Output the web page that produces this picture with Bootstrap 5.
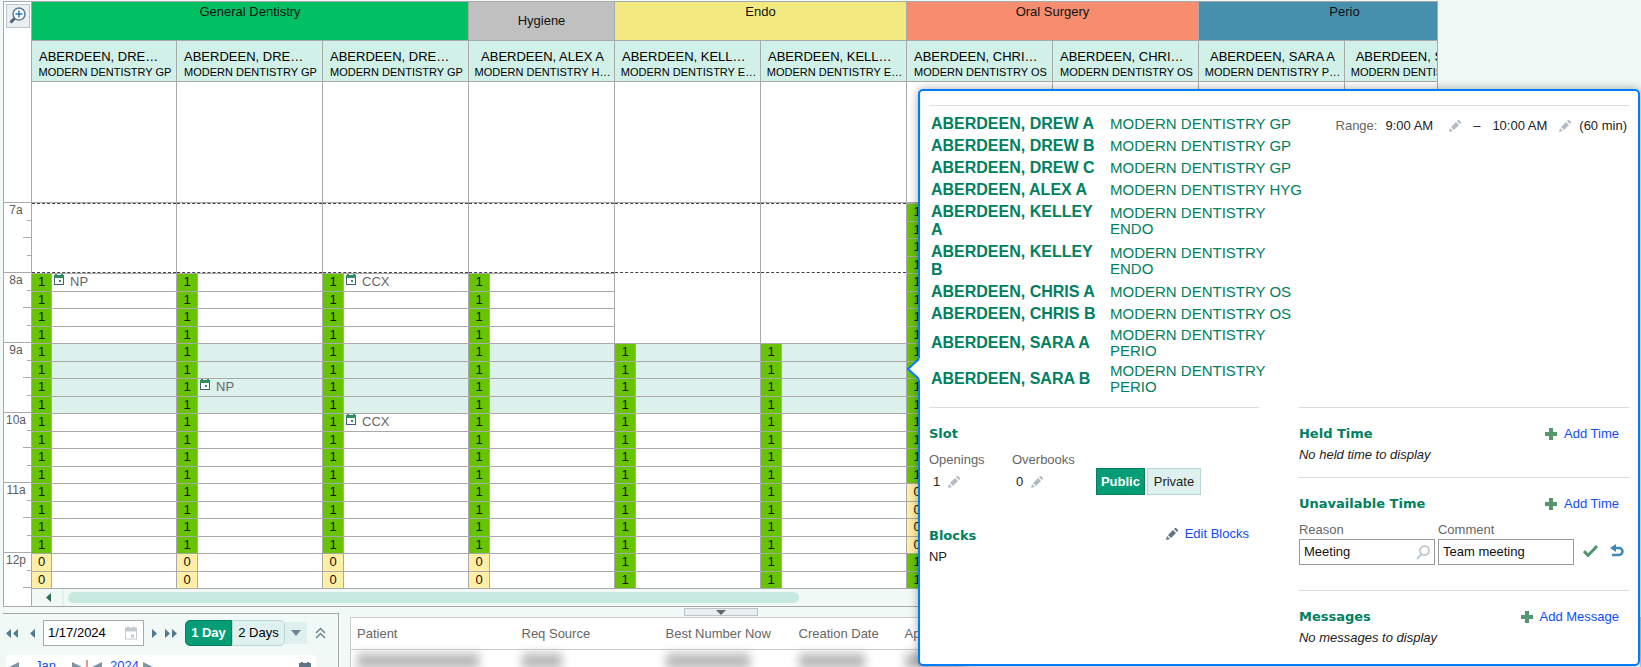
<!DOCTYPE html>
<html lang="en">
<head>
<meta charset="utf-8">
<meta name="viewport" content="width=device-width, initial-scale=1">
<title>Schedule</title>
<link href="https://cdn.jsdelivr.net/npm/bootstrap@5.3.0/dist/css/bootstrap.min.css" rel="stylesheet">
<style>
:root { --line:#a9a9a9; --pale:#f0f9f6; --green:#008060; --blue:#0f4bff; }
body { font:13px/16px "Liberation Sans",Arial,sans-serif; background:var(--pale); color:#222; overflow:hidden; }
button, input { font:inherit; color:inherit; }
svg { display:block; flex:none; }
.app-shell { min-height:100vh; overflow:hidden; }

/* schedule */
.schedule { margin:1px 203px 0 3px; border:1px solid var(--line); background:#fff; }
.ruler { width:28px; flex:none; border-right:1px solid var(--line); color:#5b5b5b; font-size:12px; line-height:14px; text-align:center; }
.corner { height:200px; padding:2px; }
.zoom-btn { width:24px; height:24px; padding:0; border:1px solid #b9c4c9; background:#eaeff2; display:grid; place-items:center; }
.tick { height:18px; position:relative; }
.tick:nth-child(odd) { height:17px; }
.tick::before { content:""; position:absolute; top:0; right:0; width:4px; height:1px; background:var(--line); }
.tick.half::before { width:8px; }
.tick.hour::before { width:100%; }
.tick.hour { padding:1px 3px 0 0; }
.sheet { overflow:hidden; min-width:0; flex:1; }
.group-row, .head-row, .lane-row { width:1460px; display:flex; }
.group { height:38px; padding-top:2px; border-right:1px solid var(--line); text-align:center; color:#111; }
.group.mid { padding-top:11px; }
.g1 { width:146px; } .g2 { width:292px; } .g3 { width:437px; }
.head-row { border-top:1px solid var(--line); border-bottom:1px solid var(--line); background:#d0f0e8; color:#000; }
.person { width:146px; height:40px; padding:7px 0 0 2px; border-right:1px solid var(--line); text-align:center; white-space:nowrap; }
.person:first-child, .lane:first-child { width:145px; }
.person div { line-height:17px; }
.person div.cut { text-align:left; padding-left:5px; }
.person p { margin:0; font-size:11px; line-height:15px; }
.lane { width:146px; border-right:1px solid var(--line); }
.closed { height:121px; border-bottom:1px solid var(--line); }
.early { height:70px; border:dashed #444; border-width:1px 0; }
.empty-hour { height:70px; }
.slot-line { display:flex; height:17px; border-top:1px solid var(--line); }
.slot-line:nth-child(odd) { height:18px; }
.slot-line.sel { background:#ddf1ec; }
.seat { width:21px; flex:none; background:#68c400; color:#111; text-align:center; border-right:1px solid var(--line); line-height:15px; }
.lane:first-child .seat { width:20px; }
.seat.zero { background:#ffefa5; }
.visit { color:#666; padding-left:2px; gap:6px; display:flex; align-items:flex-start; line-height:15px; }
.h-scroll { height:18px; border-top:1px solid var(--line); background:var(--pale); display:flex; align-items:center; }
.scroll-left { width:32px; height:17px; border:0; border-right:2px solid #e3f1ed; padding:0 0 0 14px; background:none; }
.thumb { width:52%; height:11px; border-radius:6px; background:#c6eae0; margin-left:4px; }

/* lower area */
.lower { padding-left:3px; }
.cal-pane { width:336px; margin-top:6px; border:solid var(--line); border-width:1px 1px 0 0; flex:none; }
.bar { padding:6px 0 0 3px; height:41px; }
.plain-btn { border:0; background:none; padding:0; }
.twin { display:flex; gap:2px; }
.date-field { width:101px; height:26px; background:#fff; border:1px solid var(--line); flex:none; }
.date-field input { border:0; outline:0; padding:0 0 0 4px; width:81px; background:none; color:#000; }
.day-btn { height:26px; border:1px solid #b9d7d7; background:#dff1ee; padding:0; color:#000; border-radius:0 5px 5px 0; width:53px; }
.day-btn.on { background:#059d76; border-color:#048060; color:#fff; border-radius:5px 0 0 5px; font-weight:bold; width:47px; white-space:nowrap; }
.more-btn { width:22px; height:22px; background:#dff1ee; border:0; padding:0 0 0 5px; }
.mini-cal { margin:0 22px 0 3px; background:#fff; border-radius:4px 4px 0 0; height:30px; padding:3px 5px 0 3px; }
.mini-cal a { color:var(--blue); text-decoration:none; }
.split-row { height:10px; padding-top:1px; }
.splitter { width:74px; height:8px; border:1px solid #bcc6ca; background:#e9eef1; padding:0; display:grid; place-items:center; margin-left:334px; }
.list-pane { min-width:0; margin-left:11px; }
.req-table { background:#fff; border:1px solid #ccc; table-layout:fixed; width:100%; color:#666; }
.req-table th { font-weight:normal; height:32px; padding:0 6px; border-bottom:1px solid #ccc; }
.req-table td { height:40px; padding:3px 6px; vertical-align:top; }
.smudge { display:block; height:16px; background:#bbb; filter:blur(5px); }

/* slot bubble */
.bubble { position:absolute; top:89px; right:1px; width:44%; min-height:577px; background:#fff; border:2px solid #007bff; border-radius:5px; padding:14px 9px; box-shadow:0 0 10px rgba(0,0,0,.35); }
.bubble-arrow { position:absolute; left:-14px; top:267px; }
.rule { border-top:1px solid #ddd; }
.people { color:var(--green); margin-top:3px; }
.people td { padding:2px 0; vertical-align:middle; }
.people .who { font-weight:bold; font-size:16px; line-height:18px; width:181px; padding:2px 9px 2px 2px; }
.people .dept { font-size:15px; line-height:16px; width:196px; }
.halves { display:grid; grid-template-columns:1fr 1fr; column-gap:40px; margin-top:10px; }
.part { padding-top:17px; }
.sec { font:bold 13px/18px "DejaVu Sans","Liberation Sans",sans-serif; color:var(--green); margin:0; }
.muted { color:#666; }
.act { color:var(--blue); text-decoration:none; display:flex; gap:7px; align-items:center; margin-right:10px; }
.fields { padding-top:9px; }
.value-line { padding:6px 0 0 4px; }
.pill-btn { height:27px; border:1px solid #b9d7d7; background:#dff1ee; padding:0; width:54px; white-space:nowrap; }
.pill-btn.on { background:#059d76; border-color:#048060; color:#fff; font-weight:bold; width:49px; }
.box { width:136px; height:26px; border:1px solid #999; background:#fff; display:flex; align-items:center; margin-top:1px; }
.box input { border:0; outline:0; background:none; width:100%; padding:0 4px; min-width:0; color:#111; }
</style>
</head>
<body>
<svg width="0" height="0" class="position-absolute" aria-hidden="true">
  <symbol id="i-cal" viewBox="0 0 10 11"><path d="M0 3h10v8H0z" fill="#3f5f78"/><path d="M1 4h8v6H1z" fill="#fff"/><path d="M1 0h2v1h4V0h2v1h1v3H0V1h1z" fill="#2e8b62"/><path d="M5 6h2v2H5z" fill="#2e8b62"/></symbol>
  <symbol id="i-cal-g" viewBox="0 0 12 13"><path fill="currentColor" fill-rule="evenodd" d="M0 1h2V0h2v1h4V0h2v1h2v12H0zM1 5v7h10V5zM6 8h3v3H6z"/></symbol>
  <symbol id="i-pen" viewBox="0 0 12 12"><path fill="currentColor" d="M0 12l1-4 3 3zM2 7l5-5 3 3-5 5zM8 1l1-1h1l2 2v1l-1 1z"/></symbol>
  <symbol id="i-plus" viewBox="0 0 12 12"><path fill="#56966f" d="M4 0h4v4h4v4H8v4H4V8H0V4h4z"/></symbol>
  <symbol id="i-left" viewBox="0 0 5 9"><path fill="currentColor" d="M5 0v9L0 4.500z"/></symbol>
  <symbol id="i-right" viewBox="0 0 5 9"><path fill="currentColor" d="M0 0v9l5-4.500z"/></symbol>
</svg>

<div class="app-shell position-relative">
  <main class="schedule">
    <div class="d-flex">
      <div class="ruler" id="ruler">
        <div class="corner"><button class="zoom-btn" aria-label="Zoom in"><svg width="18" height="18" viewBox="0 0 18 18" fill="none"><circle cx="10" cy="7" r="6" fill="#fff" stroke="#5b7c93" stroke-width="1.500"/><path d="M10 3.500v7M6.500 7h7" stroke="#2878b0" stroke-width="1.500"/><path d="M5.500 11.500L1.500 15.500" stroke="#4d6375" stroke-width="3"/></svg></button></div>
      </div>
      <div class="sheet">
        <div class="group-row">
          <div class="group g3" style="background:#00c063">General Dentistry</div>
          <div class="group g1 mid" style="background:#c0c0c0">Hygiene</div>
          <div class="group g2" style="background:#f2e981">Endo</div>
          <div class="group g2" style="background:#f68d6f">Oral Surgery</div>
          <div class="group g2" style="background:#4690ae">Perio</div>
        </div>
        <div class="head-row" id="heads"></div>
        <div class="lane-row" id="lanes"></div>
        <div class="h-scroll"><button class="scroll-left" aria-label="Scroll left"><svg width="5" height="9" color="#2f6b50"><use href="#i-left"/></svg></button><div class="thumb"></div></div>
      </div>
    </div>
  </main>

  <div class="lower d-flex">
    <section class="cal-pane">
      <div class="bar d-flex align-items-start">
        <div class="d-flex align-items-center gap-2 w-100">
          <button class="plain-btn twin" aria-label="Previous week"><svg width="5" height="9" color="#56788c"><use href="#i-left"/></svg><svg width="5" height="9" color="#56788c"><use href="#i-left"/></svg></button>
          <button class="plain-btn ms-1" aria-label="Previous day"><svg width="5" height="9" color="#56788c"><use href="#i-left"/></svg></button>
          <div class="date-field d-flex align-items-center"><input aria-label="Date" value="1/17/2024"><svg width="12" height="14" color="#c3ccd2"><use href="#i-cal-g"/></svg></div>
          <button class="plain-btn" aria-label="Next day"><svg width="5" height="9" color="#56788c"><use href="#i-right"/></svg></button>
          <button class="plain-btn twin" aria-label="Next week"><svg width="5" height="9" color="#56788c"><use href="#i-right"/></svg><svg width="5" height="9" color="#56788c"><use href="#i-right"/></svg></button>
          <div class="d-flex align-items-center"><button class="day-btn on">1 Day</button><button class="day-btn">2 Days</button><button class="more-btn" aria-label="More views"><svg width="12" height="6"><path d="M1 0h10L6 6z" fill="#6b8494"/></svg></button></div>
          <button class="plain-btn" aria-label="Collapse"><svg width="11" height="12" fill="none" stroke="#6b8494" stroke-width="1.500"><path d="M1 6l4.500-4.500L10 6M1 11l4.500-4.500L10 11"/></svg></button>
        </div>
      </div>
      <div class="mini-cal d-flex align-items-start">
        <svg class="mt-1" width="10" height="9"><path d="M10 0v9L0 5z" fill="#8294a3"/></svg>
        <a href="#" class="mx-3">Jan</a>
        <svg class="mt-1" width="10" height="9"><path d="M0 0v9l10-4z" fill="#8294a3"/></svg>
        <svg class="mx-1" width="2" height="20"><path d="M1 2v18" stroke="#c0392b"/></svg>
        <svg class="mt-1 me-2" width="10" height="9"><path d="M10 0v9L0 5z" fill="#8294a3"/></svg>
        <a href="#" class="me-1">2024</a>
        <svg class="mt-1" width="10" height="9"><path d="M0 0v9l10-4z" fill="#8294a3"/></svg>
        <svg class="ms-auto mt-1" width="12" height="13" color="#5f7585"><use href="#i-cal-g"/></svg>
      </div>
    </section>
    <section class="list-pane flex-grow-1">
      <div class="split-row"><button class="splitter" aria-label="Collapse list"><svg width="10" height="5"><path d="M0 0h10L5 5z" fill="#666"/></svg></button></div>
      <table class="req-table">
        <colgroup><col style="width:165px"><col style="width:144px"><col style="width:133px"><col style="width:106px"><col></colgroup>
        <thead><tr><th>Patient</th><th>Req Source</th><th>Best Number Now</th><th>Creation Date</th><th>App</th></tr></thead>
        <tbody><tr><td><span class="smudge" style="width:122px"></span></td><td><span class="smudge" style="width:40px"></span></td><td><span class="smudge" style="width:84px"></span></td><td><span class="smudge" style="width:66px"></span></td><td><span class="smudge" style="width:60px"></span></td></tr></tbody>
      </table>
    </section>
  </div>

  <aside class="bubble" role="dialog" aria-label="Slot details">
    <svg class="bubble-arrow" width="14" height="22"><path d="M14 0L2 11l12 11z" fill="#fff"/><path d="M13 1L2 11l11 10" fill="none" stroke="#007bff" stroke-width="2"/></svg>
    <div class="rule pt-1 d-flex justify-content-between align-items-start">
      <table class="people"><tbody id="people"></tbody></table>
      <div class="d-flex align-items-center pt-2 text-nowrap" style="padding-right:2px">
        <span class="muted me-2">Range:</span><span>9:00 AM</span>
        <button class="plain-btn ms-3" aria-label="Edit start"><svg width="12" height="12" color="#b3bcc6"><use href="#i-pen"/></svg></button>
        <span class="mx-2 px-1">–</span><span>10:00 AM</span>
        <button class="plain-btn mx-2 ps-1" aria-label="Edit end"><svg width="12" height="12" color="#b3bcc6"><use href="#i-pen"/></svg></button>
        <span>(60 min)</span>
      </div>
    </div>
    <div class="halves">
      <section class="rule part">
        <h2 class="sec">Slot</h2>
        <div class="d-flex fields">
          <div style="width:83px"><div class="muted">Openings</div><div class="value-line d-flex align-items-center gap-2">1 <button class="plain-btn" aria-label="Edit openings"><svg width="12" height="12" color="#b3bcc6"><use href="#i-pen"/></svg></button></div></div>
          <div style="width:84px"><div class="muted">Overbooks</div><div class="value-line d-flex align-items-center gap-2">0 <button class="plain-btn" aria-label="Edit overbooks"><svg width="12" height="12" color="#b3bcc6"><use href="#i-pen"/></svg></button></div></div>
          <div class="mt-3 d-flex" style="gap:2px"><button class="pill-btn on">Public</button><button class="pill-btn">Private</button></div>
        </div>
        <div class="d-flex justify-content-between align-items-center mt-4 pt-1"><h2 class="sec pt-1">Blocks</h2><a href="#" class="act"><svg width="12" height="12" color="#5f7485"><use href="#i-pen"/></svg>Edit Blocks</a></div>
        <div class="mt-1">NP</div>
      </section>
      <section>
        <div class="rule part" style="height:70px">
          <div class="d-flex justify-content-between"><h2 class="sec">Held Time</h2><a href="#" class="act"><svg width="12" height="12"><use href="#i-plus"/></svg>Add Time</a></div>
          <div class="fst-italic mt-1">No held time to display</div>
        </div>
        <div class="rule part" style="height:113px">
          <div class="d-flex justify-content-between"><h2 class="sec">Unavailable Time</h2><a href="#" class="act"><svg width="12" height="12"><use href="#i-plus"/></svg>Add Time</a></div>
          <div class="d-flex align-items-end fields" style="gap:3px">
            <div><label for="reason" class="muted d-block">Reason</label><div class="box"><input id="reason" value="Meeting"><svg class="me-1" width="14" height="15" fill="none" stroke="#c3ccd2" stroke-width="2"><circle cx="8.500" cy="5.500" r="4.500"/><path d="M5.500 9L1 14"/></svg></div></div>
            <div><label for="comment" class="muted d-block">Comment</label><div class="box"><input id="comment" value="Team meeting"></div></div>
            <div class="d-flex gap-2 mb-2" style="margin-left:6px"><button class="plain-btn" aria-label="Accept"><svg width="15" height="12"><path d="M1 6l4 4.500L14 1" fill="none" stroke="#56966f" stroke-width="3"/></svg></button><button class="plain-btn ms-1" aria-label="Undo"><svg width="15" height="13"><path d="M5 4h4a3.500 3.500 0 010 7H2" fill="none" stroke="#3f88b5" stroke-width="2.500"/><path d="M0 4l6-4v8z" fill="#3f88b5"/></svg></button></div>
          </div>
        </div>
        <div class="rule part">
          <div class="d-flex justify-content-between"><h2 class="sec">Messages</h2><a href="#" class="act"><svg width="12" height="12"><use href="#i-plus"/></svg>Add Message</a></div>
          <div class="fst-italic mt-1">No messages to display</div>
        </div>
      </section>
    </div>
  </aside>
</div>

<script>
// Name, department, and the short forms that fit a column heading.
const staff = [
  ['DREW A','GP','DRE…','GP'],['DREW B','GP','DRE…','GP'],['DREW C','GP','DRE…','GP'],
  ['ALEX A','HYG','ALEX A','H…'],['KELLEY A','ENDO','KELL…','E…'],['KELLEY B','ENDO','KELL…','E…'],
  ['CHRIS A','OS','CHRI…','OS'],['CHRIS B','OS','CHRI…','OS'],['SARA A','PERIO','SARA A','P…'],['SARA B','PERIO','SARA B','P…']
];
// Openings per quarter hour, from 8:00 to 12:30.
const gp = '111111111111111100', endo = '    11111111111111', os = '111111111111000011';
const lanes = [gp, gp, gp, gp, endo, endo, os];
const visits = { '0-0':'NP', '1-6':'NP', '2-0':'CCX', '2-8':'CCX' };

heads.innerHTML = staff.map(([n, d, sn, sd]) =>
  `<div class="person" title="ABERDEEN, ${n}"><div class="${sn === n ? '' : 'cut'}">ABERDEEN, ${sn}</div><p>MODERN DENTISTRY ${sd}</p></div>`).join('');
people.innerHTML = staff.map(([n, d]) =>
  `<tr><td class="who">ABERDEEN, ${n}</td><td class="dept">MODERN DENTISTRY ${d}</td></tr>`).join('');

const row = (n, sel, visit) => `<div class="slot-line${sel ? ' sel' : ''}"><span class="seat${n === '0' ? ' zero' : ''}">${n}</span>` +
  (visit ? `<span class="visit"><svg width="10" height="11"><use href="#i-cal"/></svg>${visit}</span>` : '') + '</div>';
document.getElementById('lanes').innerHTML = staff.map((_, c) => {
  const plan = lanes[c] || '';
  const early = c === 6 ? '<div>' + row('1').repeat(4) + '</div>' : '<div class="early"></div>';
  const blank = plan.startsWith(' ') ? '<div class="empty-hour"></div>' : '';
  const rows = [...plan].map((n, i) => n === ' ' ? '' : row(n, i > 3 && i < 8, visits[c + '-' + i])).join('');
  return `<div class="lane"><div class="closed"></div>${early}${blank}<div>${rows}</div></div>`;
}).join('');

const hours = ['7a','8a','9a','10a','11a','12p'];
ruler.insertAdjacentHTML('beforeend', hours.flatMap((h, i) =>
  [0, 1, 2, 3].filter(q => i < 5 || q < 3).map(q =>
    `<div class="tick${q === 0 ? ' hour' : q === 2 ? ' half' : ''}">${q ? '' : h}</div>`)).join(''));
</script>
<script src="https://cdn.jsdelivr.net/npm/bootstrap@5.3.0/dist/js/bootstrap.bundle.min.js"></script>
</body>
</html>
